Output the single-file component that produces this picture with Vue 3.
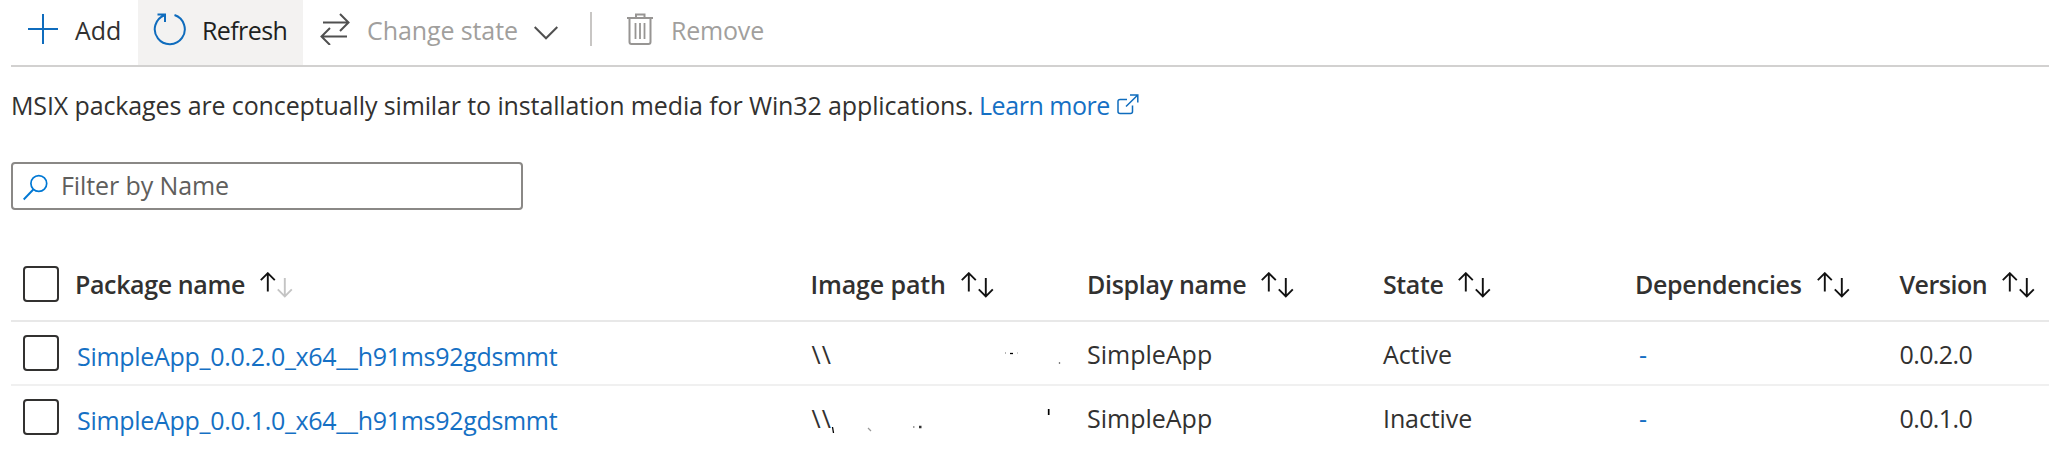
<script setup>
const columns = [
  { key: 'name', label: 'Package name', sorted: true },
  { key: 'path', label: 'Image path' },
  { key: 'display', label: 'Display name' },
  { key: 'state', label: 'State' },
  { key: 'deps', label: 'Dependencies' },
  { key: 'version', label: 'Version' },
]
const rows = [
  {
    name: 'SimpleApp_0.0.2.0_x64__h91ms92gdsmmt',
    display: 'SimpleApp',
    state: 'Active',
    version: '0.0.2.0',
    marks: [
      { d: 'M194 31h1', o: 0.4 },
      { d: 'M199 31.5h3', o: 1 },
      { d: 'M206 31h1', o: 0.25 },
      { d: 'M248.500 40v2', o: 0.5 },
    ],
  },
  {
    name: 'SimpleApp_0.0.1.0_x64__h91ms92gdsmmt',
    display: 'SimpleApp',
    state: 'Inactive',
    version: '0.0.1.0',
    marks: [
      { d: 'M21.500 41l1 6', o: 1 },
      { d: 'M57 42l3 3', o: 0.4 },
      { d: 'M102 41h1.500', o: 0.5 },
      { d: 'M108 40.500h2.500M108 41.500h2.500', o: 0.8 },
      { d: 'M237.500 23v6', o: 1.0 },
      { d: 'M238 23v6', o: 0.7 },
    ],
  },
]
</script>

<template>
  <main class="page">
    <div class="toolbar">
      <button class="cmd add">
        <svg width="30" height="30" viewBox="0 0 30 30" class="blue"><path d="M15 0v30M0 15h30" stroke-width="2" /></svg>
        <span>Add</span>
      </button>
      <button class="cmd refresh">
        <svg width="34" height="34" viewBox="0 0 34 34" class="blue">
          <path d="M21.500 3A15 15 0 1 1 11.500 3.200M4.500 2.500h7.500v7.500" stroke-width="2" />
        </svg>
        <span>Refresh</span>
      </button>
      <button class="cmd change">
        <svg width="30" height="32" viewBox="0 0 30 32" class="dark">
          <path d="M3 9.500h25.500M20 1l8.500 8.500L20 18M27 23.500H1.500M10 15l-8.500 8.500L10 32" stroke-width="2" />
        </svg>
        <span>Change state</span>
        <svg width="24" height="14" viewBox="0 0 24 14" class="dark chev"><path d="M.7 1L12 12.300 23.300 1" stroke-width="2" /></svg>
      </button>
      <i class="sep"></i>
      <button class="cmd remove">
        <svg width="26" height="32" viewBox="0 0 26 32" class="grey">
          <path d="M0 5h26M9 5V1.500h8.500V5M2.500 5v24q0 2 2 2h17q2 0 2-2V5" stroke-width="2" />
          <path d="M8.500 10v16M13 10v16M17.500 10v16" stroke-width="1.800" />
        </svg>
        <span>Remove</span>
      </button>
    </div>

    <p class="intro">
      <span class="desc">MSIX packages are conceptually similar to installation media for Win32 applications.</span>
      <a class="more">Learn more</a>
      <svg width="22" height="21" viewBox="0 0 22 21" class="blue">
        <path d="M10 5.500H3.200Q1 5.500 1 7.500V17.500Q1 19.500 3.200 19.500H13.500Q15.500 19.500 15.500 17.500V11.500M9 12.500L20.500 1.200M13 1H20.800V8.500" stroke-width="1.500" />
      </svg>
    </p>

    <div class="filter">
      <svg width="25" height="27" viewBox="0 0 25 27" class="bright">
        <circle cx="15.800" cy="9.500" r="7.900" stroke-width="1.700" /><path d="M10.300 15.500L.7 25.500" stroke-width="1.900" />
      </svg>
      <span>Filter by Name</span>
    </div>

    <div class="table">
      <div class="row head">
        <i class="box"></i>
        <div v-for="c in columns" :key="c.key" class="cell" :class="'h-' + c.key">
          <span>{{ c.label }}</span>
          <svg width="33" height="26" viewBox="0 0 33 26" class="sort">
            <path d="M7.800 19.500V1.500M.8 8.200l7-7 7 7" />
            <path :class="{ dim: c.sorted }" d="M24.800 6v18M17.800 17.300l7 7 7-7" />
          </svg>
        </div>
      </div>
      <div v-for="r in rows" :key="r.name" class="row">
        <i class="box"></i>
        <div class="cell link"><a>{{ r.name }}</a></div>
        <div class="cell path">
          <span>\\</span>
          <svg class="marks" width="270" height="64" viewBox="0 0 270 64">
            <path v-for="m in r.marks" :key="m.d" :d="m.d" :opacity="m.o" />
          </svg>
        </div>
        <div class="cell"><span>{{ r.display }}</span></div>
        <div class="cell state"><span>{{ r.state }}</span></div>
        <div class="cell dash"><a>-</a></div>
        <div class="cell version"><span>{{ r.version }}</span></div>
      </div>
    </div>
  </main>
</template>

<style>
body { margin: 0; background: #fff; }
</style>

<style scoped>
.page {
  box-sizing: border-box;
  height: 468px;
  padding-left: 11px;
  overflow: hidden;
  background: #fff;
  color: #323130;
  font: 25px/34px "Open Sans", "Noto Sans", sans-serif;
  white-space: nowrap;
}
svg { display: block; flex: none; fill: none; }
.blue { stroke: #0f6cbd; }
.bright { stroke: #0078d4; }
.dark { stroke: #505050; }
.grey { stroke: #979593; }
a { color: #1570c4; }

.toolbar { display: flex; height: 65px; border-bottom: 2px solid #d2d1d0; }
.cmd {
  display: flex;
  align-items: flex-start;
  height: 65px;
  padding: 0;
  border: 0;
  background: none;
  color: #323130;
  font: inherit;
}
.cmd span { margin-top: 13px; }
.add { width: 127px; box-sizing: border-box; padding-left: 17px; }
.add svg { margin: 14px 17px 0 0; }
.refresh { width: 165px; box-sizing: border-box; padding-left: 15px; background: #f3f2f1; color: #201f1e; letter-spacing: -.6px; }
.refresh svg { margin: 12px 15px 0 0; }
.change { width: 287px; box-sizing: border-box; padding-left: 17px; color: #a19f9d; letter-spacing: -.1px; }
.change svg { margin: 13px 17px 0 0; }
.change .chev { margin: 26px 0 0 16px; }
.sep { width: 2px; height: 34px; margin-top: 12px; background: #c8c6c4; }
.remove { padding-left: 35px; color: #a19f9d; letter-spacing: -.2px; }
.remove svg { margin: 13px 18px 0 0; }

.intro { display: flex; margin: 21px 0 0; }
.desc { width: 968px; letter-spacing: -.12px; }
.more { width: 138px; letter-spacing: -.45px; }
.intro svg { margin-top: 6px; }

.filter {
  display: flex;
  box-sizing: border-box;
  width: 512px;
  height: 48px;
  margin-top: 40px;
  padding-left: 10px;
  border: 2px solid #8a8886;
  border-radius: 4px;
  color: #605e5c;
  letter-spacing: -.1px;
}
.filter svg { margin: 10px 13px 0 0; }
.filter span { margin-top: 4px; }

.table { margin-top: 38px; }
.row {
  display: grid;
  grid-template-columns: 64px 735.5px 276.5px 296px 252px 264.5px 1fr;
  box-sizing: border-box;
  height: 64px;
  border-bottom: 2px solid #f0f0f0;
}
.row:last-child { border-bottom: 0; }
.head { height: 74px; border-bottom-color: #e8e8e8; font-weight: 600; }
.box {
  box-sizing: border-box;
  width: 36px;
  height: 36px;
  margin: 13px 0 0 12px;
  border: 2px solid #323130;
  border-radius: 4px;
}
.head .box { margin-top: 18px; }
.cell { position: relative; display: flex; padding-top: 15px; }
.head .cell { padding-top: 19px; }
.sort { margin: 5px 0 0 15px; stroke: #111; stroke-width: 1.9; }
.sort .dim { stroke: #c4c4c4; }
.h-name { letter-spacing: -.38px; }
.h-path { letter-spacing: -.12px; }
.h-display { letter-spacing: -.3px; }
.h-state { letter-spacing: -.4px; }
.h-deps { letter-spacing: -.32px; }
.h-version { letter-spacing: -.5px; }
.link { padding: 17px 0 0 2px; letter-spacing: -.3px; }
.path { padding-left: 1px; letter-spacing: 1.2px; }
.marks { position: absolute; left: 0; top: 0; stroke: #000; stroke-width: 1.3; }
.state { letter-spacing: -.1px; }
.dash { padding-left: 4px; }
.version { letter-spacing: -.6px; }
</style>
